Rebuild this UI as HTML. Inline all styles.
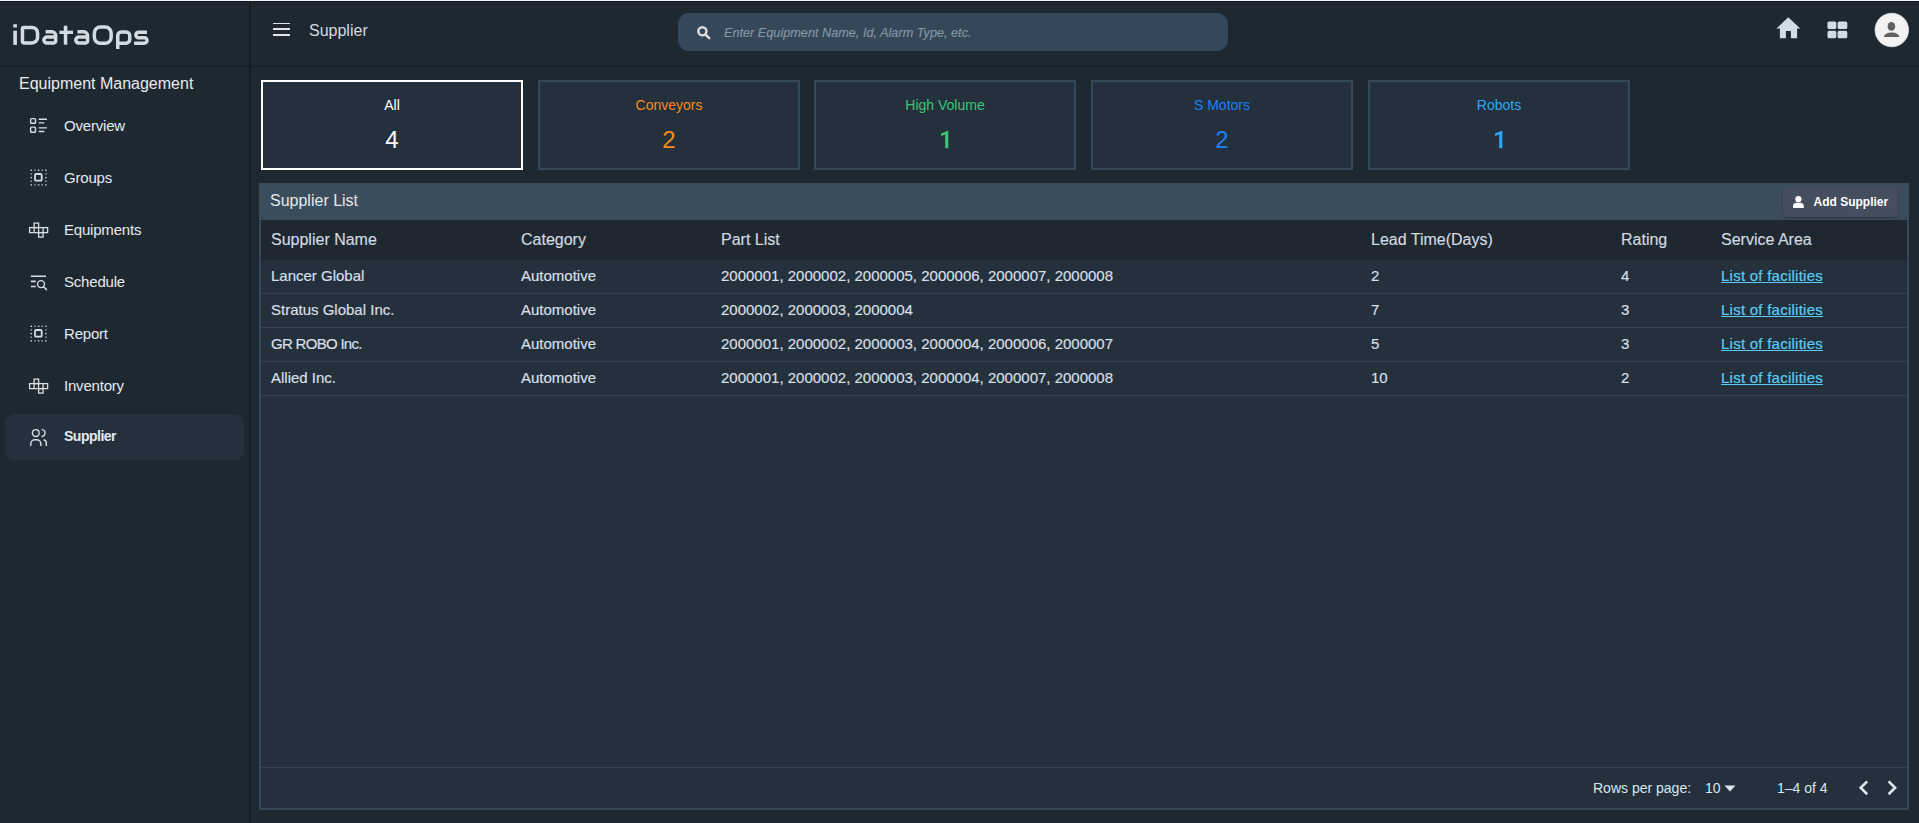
<!DOCTYPE html>
<html><head><meta charset="utf-8">
<style>
*{box-sizing:border-box;margin:0;padding:0}
html,body{width:1919px;height:823px;overflow:hidden;background:#1e2831;font-family:"Liberation Sans",sans-serif;color:#e3e8ec}
.abs{position:absolute}
#topline{left:0;top:0;width:1919px;height:1px;background:#f2f2f2}
#topline2{left:0;top:1px;width:1919px;height:1px;background:#101a24}
#hdrline{left:0;top:66px;width:1919px;height:1px;background:#161c23}
#sideline{left:249px;top:2px;width:1px;height:821px;background:#141a21;box-shadow:1px 0 0 #1a212a}
.t{position:absolute;white-space:nowrap;line-height:1}
.nav{font-size:15px;color:#e4eaef;letter-spacing:-0.2px}
.card{position:absolute;top:80px;width:262px;height:90px;background:#24313c;border:2px solid #354858}
.card .lab{position:absolute;left:0;right:0;top:16.15px;text-align:center;font-size:14px;line-height:1}
.card .num{position:absolute;left:0;right:0;top:45.9px;text-align:center;font-size:24px;line-height:1}
.th{font-size:16px;top:232px;color:#d3dae0;-webkit-text-stroke:0.15px #d3dae0}
.td{font-size:15px;color:#d8dfe5;-webkit-text-stroke:0.2px #d8dfe5}
.link{color:#5ccdf6;-webkit-text-stroke:0.2px #5ccdf6;text-decoration:underline;letter-spacing:0.25px}
.sep{left:261px;width:1646px;height:1px;background:#34444f}
.pg{font-size:14px;color:#dfe5ea}
</style></head><body>
<div id="topline" class="abs"></div>
<div id="topline2" class="abs"></div>
<div id="hdrline" class="abs"></div>
<div id="sideline" class="abs"></div>

<!-- logo -->
<svg class="abs" style="left:0;top:0" width="160" height="60" viewBox="0 0 160 60">
<g fill="#d3dbe2">
<rect x="13.3" y="24.2" width="3.6" height="3.3"/>
<rect x="13.3" y="30.7" width="3.6" height="14.2"/>
<rect x="63.8" y="25.7" width="3.5" height="19"/>
<rect x="59.4" y="30.7" width="13.6" height="3.3"/>
</g>
<g fill="none" stroke="#d3dbe2" stroke-width="3.5">
<path d="M24 27.45H32A5.55 5.55 0 0 1 37.55 33V37.4A5.55 5.55 0 0 1 32 42.95H24A1.55 1.55 0 0 1 22.45 41.4V29A1.55 1.55 0 0 1 24 27.45Z"/>
<path id="la" d="M45.6 31.85H52A3.7 3.7 0 0 1 55.7 35.55V41A1.95 1.95 0 0 1 53.75 42.95H47A3 3 0 0 1 43.85 40.05A3 3 0 0 1 47 37.1H55.7"/>
<use href="#la" x="31.9"/>
<path d="M100.35 26.95H105.15A6 6 0 0 1 111.15 32.95V37.15A6 6 0 0 1 105.15 43.15H100.35A6 6 0 0 1 94.35 37.15V32.95A6 6 0 0 1 100.35 26.95Z"/>
<path d="M117.75 49V35.5A3.55 3.55 0 0 1 121.3 31.95H126A3.75 3.75 0 0 1 129.75 35.7V39.4A3.75 3.75 0 0 1 126 43.15H117.75"/>
<path d="M147 32.25H138.6A2.75 2.75 0 0 0 135.85 35A2.7 2.7 0 0 0 138.6 37.7H144.3A2.72 2.72 0 0 1 147.05 40.42A2.72 2.72 0 0 1 144.3 43.15H134.1"/>
</g>
</svg>

<div class="t" style="left:19px;top:75.5px;font-size:16px;color:#e6ebef">Equipment Management</div>

<!-- active nav bg -->
<div class="abs" style="left:5px;top:414px;width:239px;height:46px;border-radius:9px;background:#24313c"></div>

<div class="t nav" style="left:64px;top:118.3px">Overview</div>
<div class="t nav" style="left:64px;top:170.3px">Groups</div>
<div class="t nav" style="left:64px;top:222.3px">Equipments</div>
<div class="t nav" style="left:64px;top:274.3px">Schedule</div>
<div class="t nav" style="left:64px;top:326.3px">Report</div>
<div class="t nav" style="left:64px;top:378.3px">Inventory</div>
<div class="t nav" style="left:64px;top:429.15px;font-weight:bold;font-size:14px;letter-spacing:-0.5px">Supplier</div>

<!-- header -->
<div class="abs" style="left:273px;top:22.75px;width:17px;height:1.6px;background:#e0e4e8"></div>
<div class="abs" style="left:273px;top:28.2px;width:17px;height:1.6px;background:#e0e4e8"></div>
<div class="abs" style="left:273px;top:34px;width:17px;height:1.6px;background:#e0e4e8"></div>
<div class="t" style="left:309px;top:23.4px;font-size:16px;color:#d3dbe2">Supplier</div>

<div class="abs" style="left:678px;top:13px;width:550px;height:38px;border-radius:11px;background:#34485a"></div>
<div class="t" style="left:724px;top:26.8px;font-size:12.7px;font-style:italic;color:#8696a6;-webkit-text-stroke:0.15px #8696a6">Enter Equipment Name, Id, Alarm Type, etc.</div>

<!-- cards -->
<div class="card" style="left:261px;border-color:#ffffff"><div class="lab" style="color:#ffffff">All</div><div class="num" style="color:#ffffff">4</div></div>
<div class="card" style="left:538px"><div class="lab" style="color:#f78a1d">Conveyors</div><div class="num" style="color:#f78a1d">2</div></div>
<div class="card" style="left:814px"><div class="lab" style="color:#38c874">High Volume</div></div>
<div class="card" style="left:1091px"><div class="lab" style="color:#1f80f7">S Motors</div><div class="num" style="color:#1f80f7">2</div></div>
<div class="card" style="left:1368px"><div class="lab" style="color:#2ca7f7">Robots</div></div>


<svg class="abs" style="left:940.3px;top:130px" width="10" height="19" viewBox="0 0 10 19"><path d="M8.3 0.7V18.2H5.2V4.5L1 5.9V3.5L8 0.7Z" fill="#38c874"/></svg>
<svg class="abs" style="left:1494.3px;top:130px" width="10" height="19" viewBox="0 0 10 19"><path d="M8.3 0.7V18.2H5.2V4.5L1 5.9V3.5L8 0.7Z" fill="#2ca7f7"/></svg>
<!-- table panel -->
<div class="abs" style="left:259px;top:183px;width:1650px;height:37px;background:#3b4c5d"></div>
<div class="t" style="left:270px;top:192.7px;font-size:16px;color:#e3e8ec">Supplier List</div>
<div class="abs" style="left:1783px;top:187px;width:115px;height:30px;border-radius:4px;background:#454e5e;box-shadow:0 1px 2px rgba(0,0,0,.35)"></div>
<div class="t" style="left:1813.5px;top:195.6px;font-size:12px;font-weight:bold;color:#ffffff">Add Supplier</div>

<div class="abs" style="left:259px;top:220px;width:1650px;height:590px;background:#24313c;border:2px solid #354858;border-top:0"></div>
<div class="abs" style="left:261px;top:220px;width:1646px;height:40px;background:#1f2831"></div>

<div class="t th" style="left:271px">Supplier Name</div>
<div class="t th" style="left:521px">Category</div>
<div class="t th" style="left:721px">Part List</div>
<div class="t th" style="left:1371px">Lead Time(Days)</div>
<div class="t th" style="left:1621px">Rating</div>
<div class="t th" style="left:1721px">Service Area</div>
<div class="abs sep" style="top:293px"></div>
<div class="t td" style="left:271px;top:268.2px">Lancer Global</div>
<div class="t td" style="left:521px;top:268.2px">Automotive</div>
<div class="t td" style="left:721px;top:268.2px">2000001, 2000002, 2000005, 2000006, 2000007, 2000008</div>
<div class="t td" style="left:1371px;top:268.2px">2</div>
<div class="t td" style="left:1621px;top:268.2px">4</div>
<div class="t td link" style="left:1721px;top:268.2px">List of facilities</div>
<div class="abs sep" style="top:327px"></div>
<div class="t td" style="left:271px;top:302.2px">Stratus Global Inc.</div>
<div class="t td" style="left:521px;top:302.2px">Automotive</div>
<div class="t td" style="left:721px;top:302.2px">2000002, 2000003, 2000004</div>
<div class="t td" style="left:1371px;top:302.2px">7</div>
<div class="t td" style="left:1621px;top:302.2px">3</div>
<div class="t td link" style="left:1721px;top:302.2px">List of facilities</div>
<div class="abs sep" style="top:361px"></div>
<div class="t td" style="left:271px;top:336.2px;letter-spacing:-0.7px">GR ROBO Inc.</div>
<div class="t td" style="left:521px;top:336.2px">Automotive</div>
<div class="t td" style="left:721px;top:336.2px">2000001, 2000002, 2000003, 2000004, 2000006, 2000007</div>
<div class="t td" style="left:1371px;top:336.2px">5</div>
<div class="t td" style="left:1621px;top:336.2px">3</div>
<div class="t td link" style="left:1721px;top:336.2px">List of facilities</div>
<div class="abs sep" style="top:395px"></div>
<div class="t td" style="left:271px;top:370.2px">Allied Inc.</div>
<div class="t td" style="left:521px;top:370.2px">Automotive</div>
<div class="t td" style="left:721px;top:370.2px">2000001, 2000002, 2000003, 2000004, 2000007, 2000008</div>
<div class="t td" style="left:1371px;top:370.2px">10</div>
<div class="t td" style="left:1621px;top:370.2px">2</div>
<div class="t td link" style="left:1721px;top:370.2px">List of facilities</div>
<div class="abs" style="left:261px;top:767px;width:1646px;height:1px;background:#33424f"></div>
<div class="t pg" style="left:1593px;top:781px">Rows per page:</div>
<div class="t pg" style="left:1705px;top:781px">10</div>
<svg class="abs" style="left:1722px;top:783px" width="16" height="10"><path d="M2.5 2.5H13.5L8 8.5Z" fill="#dfe5ea"/></svg>
<div class="t pg" style="left:1777px;top:781px">1–4 of 4</div>
<svg class="abs" style="left:1852px;top:776px" width="50" height="24" fill="none" stroke="#dfe5ea" stroke-width="2.6"><path d="M15.2 5.4L8.7 11.8L15.2 18.2"/><path d="M36.6 5.4L43.1 11.8L36.6 18.2"/></svg>


<!-- sidebar icons -->
<svg class="abs" style="left:0;top:0" width="60" height="460" viewBox="0 0 60 460">
<g fill="none" stroke="#d6dde3" stroke-width="1.4">
 <rect x="30.6" y="118.6" width="4.9" height="4.7" rx="0.9"/>
 <rect x="30.6" y="127.1" width="4.9" height="5.2" rx="0.9"/>
 <path d="M38.7 119.3H46.9M38.7 122.9H44.3M38.7 127.9H46.9M38.7 131.5H44.3"/>
</g>
<g id="grp">
 <rect x="35" y="174" width="6.7" height="6.7" rx="1.3" fill="none" stroke="#d6dde3" stroke-width="1.8"/>
 <g fill="#d6dde3">
 <rect x="30.6" y="169.6" width="1.4" height="1.4"/><rect x="34.25" y="169.6" width="1.4" height="1.2" opacity=".85"/><rect x="37.9" y="169.6" width="1.4" height="1.4"/><rect x="41.55" y="169.6" width="1.4" height="1.2" opacity=".85"/><rect x="45.2" y="169.6" width="1.4" height="1.4"/>
 <rect x="30.6" y="184.2" width="1.4" height="1.4"/><rect x="34.25" y="184.3" width="1.4" height="1.2" opacity=".85"/><rect x="37.9" y="184.2" width="1.4" height="1.4"/><rect x="41.55" y="184.3" width="1.4" height="1.2" opacity=".85"/><rect x="45.2" y="184.2" width="1.4" height="1.4"/>
 <rect x="30.6" y="173.25" width="1.2" height="1.4" opacity=".85"/><rect x="30.6" y="176.9" width="1.4" height="1.4"/><rect x="30.6" y="180.55" width="1.2" height="1.4" opacity=".85"/>
 <rect x="45.4" y="173.25" width="1.2" height="1.4" opacity=".85"/><rect x="45.2" y="176.9" width="1.4" height="1.4"/><rect x="45.4" y="180.55" width="1.2" height="1.4" opacity=".85"/>
 </g>
</g>
<use href="#grp" y="156"/>
<g id="eqp" fill="none" stroke="#d6dde3" stroke-width="1.3">
 <rect x="29.6" y="227.6" width="18" height="5"/>
 <path d="M34.1 227.6V232.6M38.6 227.6V232.6M43.1 227.6V232.6"/>
 <rect x="34.1" y="223.1" width="4.5" height="4.5"/>
 <rect x="38.6" y="232.6" width="4.5" height="4.5"/>
</g>
<use href="#eqp" y="156"/>
<g fill="none" stroke="#d6dde3" stroke-width="1.6">
 <path d="M30.9 276.25H46M30.9 281.4H35.8M30.9 286.5H35.8"/>
 <circle cx="41" cy="284.1" r="3.5" stroke-width="1.4"/>
 <path d="M43.6 286.8L46.5 289.6" stroke-width="1.5" stroke-linecap="round"/>
</g>
<g fill="none" stroke="#d6dde3" stroke-width="1.45">
 <circle cx="35.8" cy="433" r="3.4"/>
 <path d="M41.6 429.6A3.4 3.4 0 0 1 41.6 436.4"/>
 <path d="M30.75 446V443.9A4.2 4.2 0 0 1 34.95 439.7H36.65A4.2 4.2 0 0 1 40.85 443.9V446"/>
 <path d="M43.5 439.8A3.2 3.2 0 0 1 46.3 443V446"/>
</g>
</svg>

<!-- search icon -->
<svg class="abs" style="left:690px;top:20px" width="30" height="25" viewBox="690 20 30 25">
 <circle cx="702.4" cy="31.3" r="4.05" fill="none" stroke="#dcdcdc" stroke-width="2.5"/>
 <path d="M705.6 34.6L709.2 38.1" stroke="#dcdcdc" stroke-width="2.6" stroke-linecap="round"/>
</svg>

<!-- header right icons -->
<svg class="abs" style="left:1760px;top:0" width="159" height="66" viewBox="1760 0 159 66">
 <path d="M1785.9 38.3V30.9H1790.9V38.3H1797.1V28.6H1800.2L1788.3 17.2L1776.4 28.6H1779.9V38.3Z" fill="#d2dce6"/>
 <g fill="#d2dce6">
 <rect x="1827.5" y="21.6" width="8.8" height="7.5" rx="1.6"/>
 <rect x="1837.6" y="21.6" width="9.7" height="7.5" rx="1.6"/>
 <rect x="1827.5" y="30.8" width="8.8" height="7.5" rx="1.6"/>
 <rect x="1837.6" y="30.8" width="9.7" height="7.5" rx="1.6"/>
 </g>
 <circle cx="1891.8" cy="30" r="16.8" fill="#f2f2f2" stroke="#dce8f3" stroke-width="0.7"/>
 <ellipse cx="1891.4" cy="26.4" rx="3.8" ry="4.45" fill="#616161"/>
 <path d="M1883.9 37A7.7 4.6 0 0 1 1899.3 37Z" fill="#616161"/>
</svg>

<!-- add supplier icon -->
<svg class="abs" style="left:1790px;top:193px" width="16" height="18" viewBox="1790 193 16 18">
 <circle cx="1798.4" cy="199.2" r="3.1" fill="#ffffff"/>
 <path d="M1793 208.1V206.3A3.6 3.6 0 0 1 1796.6 202.7H1800.2A3.6 3.6 0 0 1 1803.8 206.3V208.1Z" fill="#ffffff"/>
</svg>

</body></html>
